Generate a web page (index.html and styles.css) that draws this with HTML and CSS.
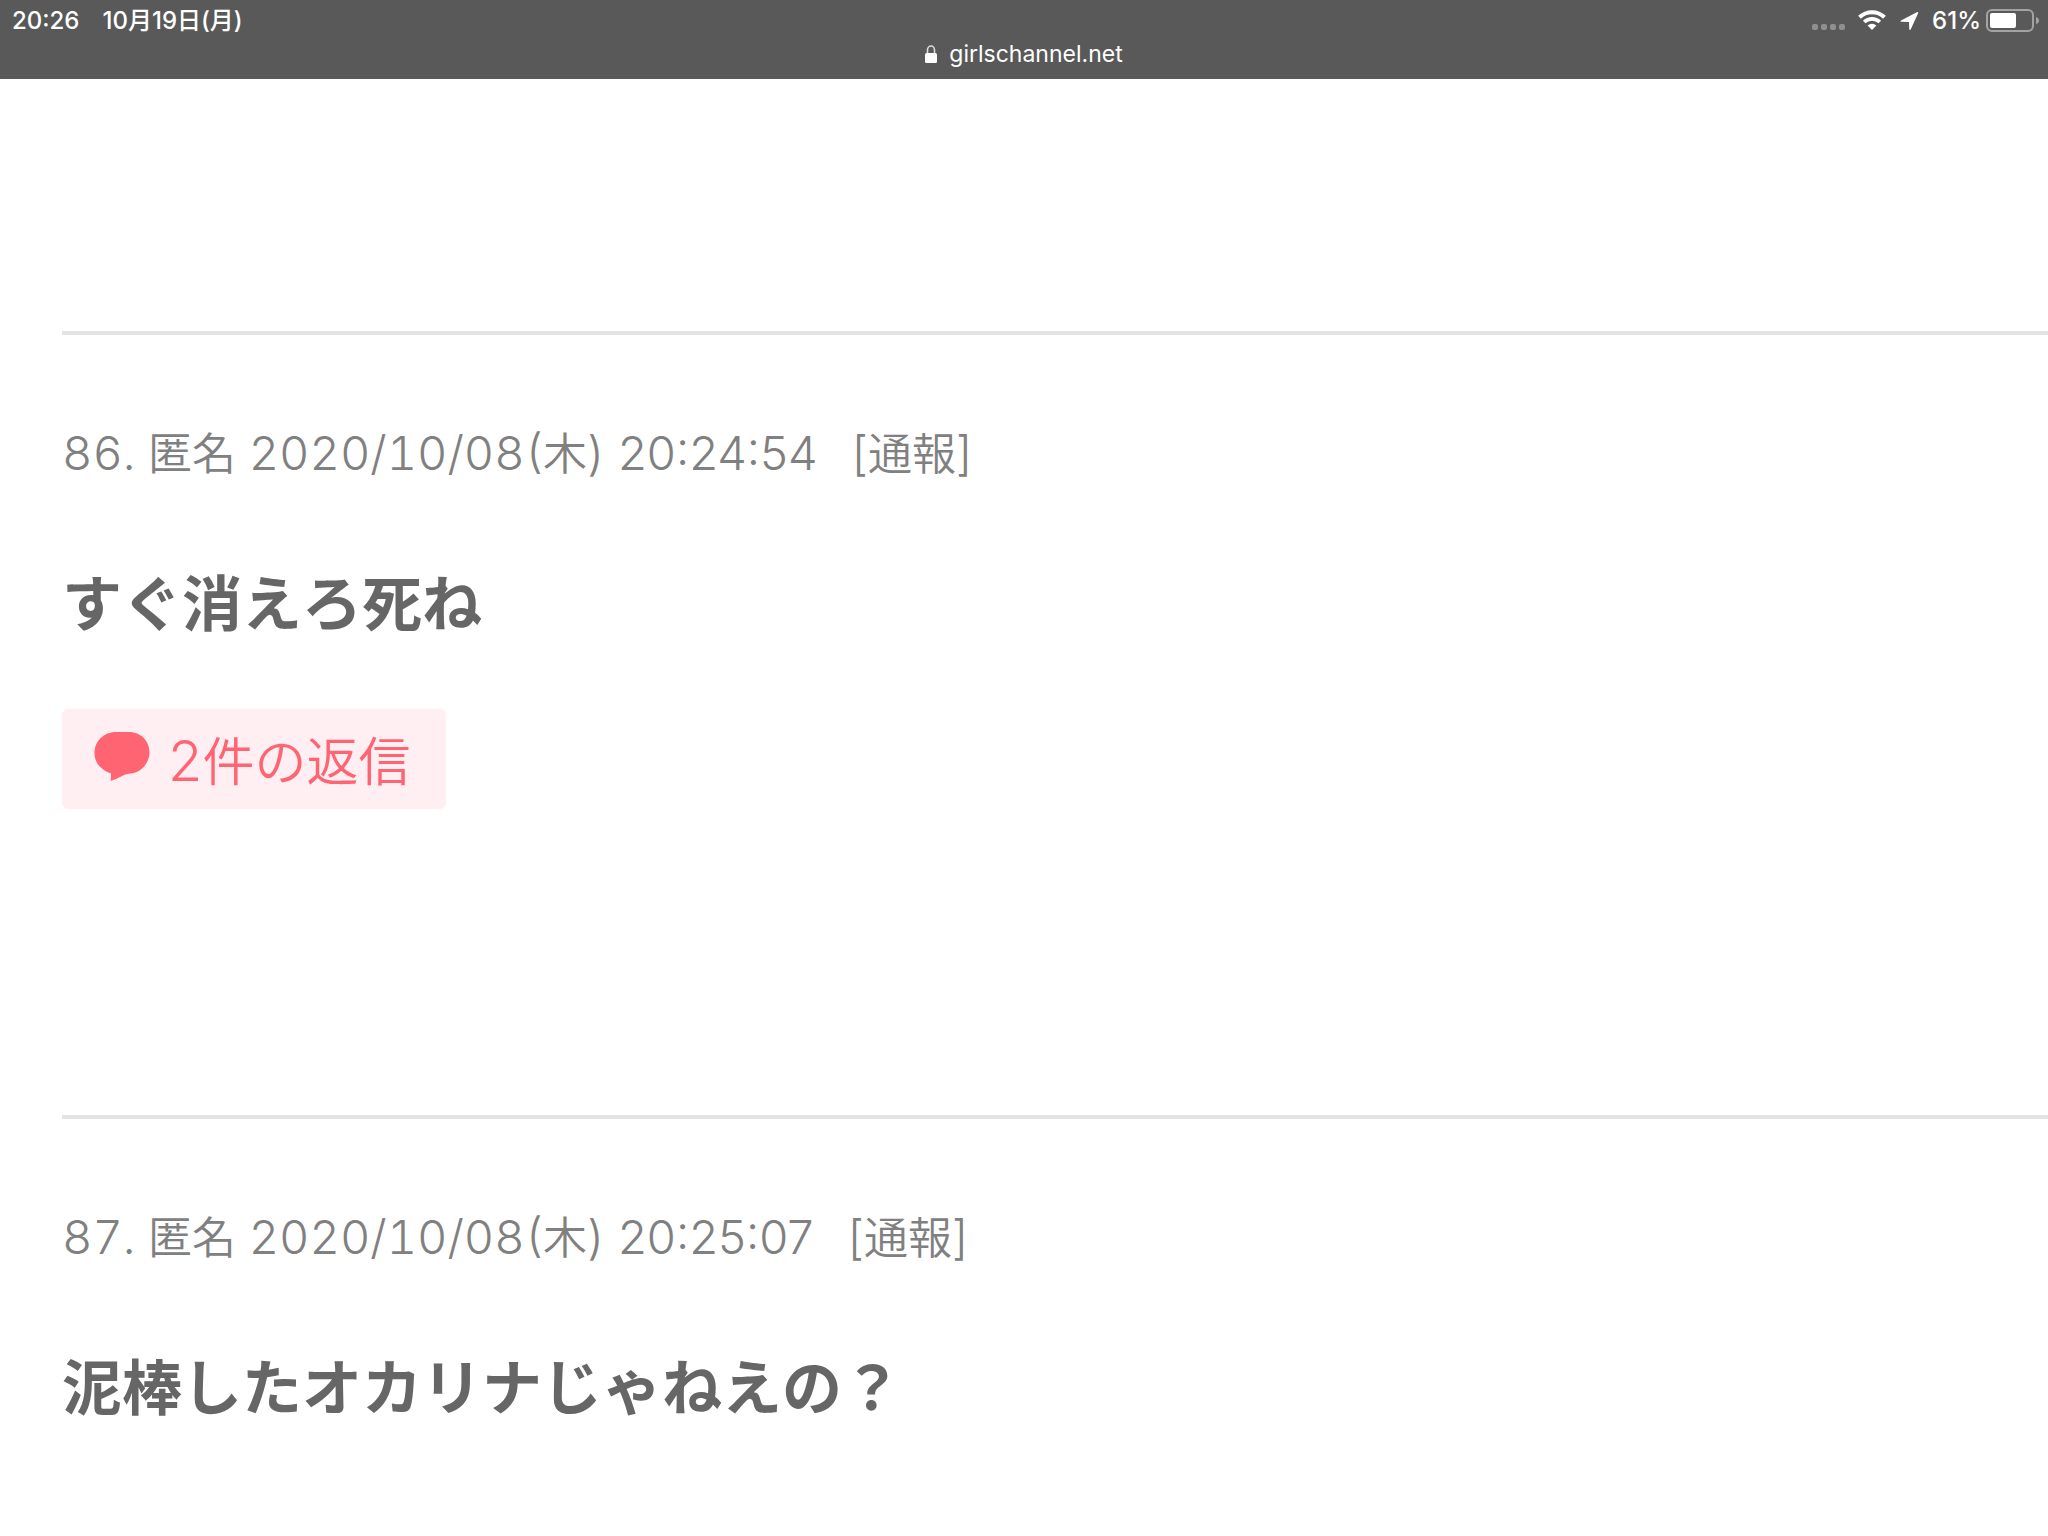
FILE: index.html
```html
<!DOCTYPE html>
<html lang="ja">
<head>
  <meta charset="UTF-8">
  <title>girlschannel.net</title>
  <meta name="viewport" content="width=device-width, initial-scale=1.0">
  <link rel="stylesheet" href="styles.css">
</head>
<body>
  <header class="topbar">
    <div class="status">
      <div class="status-left">
        <span>20:26</span>
        <span>10月19日(月)</span>
      </div>
      <div class="status-right">
        <svg class="dots" width="34" height="24" viewBox="0 0 34 24" fill="#8f8f8f">
          <rect x="0" y="17" width="6" height="6" rx="2"/>
          <rect x="9" y="17" width="6" height="6" rx="2"/>
          <rect x="18" y="17" width="6" height="6" rx="2"/>
          <rect x="27" y="17" width="6" height="6" rx="2"/>
        </svg>
        <svg class="wifi" width="28" height="24" viewBox="0 0 28 24">
          <path d="M1.5 10.2 A18 18 0 0 1 26.5 10.2" fill="none" stroke="#fff" stroke-width="4"/>
          <path d="M6.2 15 A11.2 11.2 0 0 1 21.8 15" fill="none" stroke="#fff" stroke-width="3.6"/>
          <path d="M14 23 L9.6 18.6 A6.4 6.4 0 0 1 18.4 18.6 Z" fill="#fff"/>
        </svg>
        <svg class="arrow" width="19" height="24" viewBox="0 0 19 24">
          <path d="M1 13.4 L16.8 5.3 Q18.6 4.6 18 6.5 L10.8 22.3 Q9.7 23.8 9.2 21.9 L9 14.9 L1.6 14.8 Q-.4 14.5 1 13.4 Z" fill="#fff"/>
        </svg>
        <span>61%</span>
        <svg class="battery" width="54" height="25" viewBox="0 0 54 25">
          <rect x="1" y="3" width="46" height="21" rx="5" fill="none" stroke="#a3a3a3" stroke-width="2"/>
          <rect x="4" y="6" width="26" height="15" rx="2" fill="#fff"/>
          <path d="M50 10 Q53 11 53 13.5 Q53 16 50 17 Z" fill="#a3a3a3"/>
        </svg>
      </div>
    </div>
    <div class="address">
      <svg width="12" height="20" viewBox="0 0 12 20">
        <path d="M2.5 10 V6 A3.5 4 0 0 1 9.5 6 V10" fill="none" stroke="#ddd" stroke-width="1.6"/>
        <rect x="0" y="9" width="12" height="10" rx="1.5" fill="#fff"/>
      </svg>
      <span>girlschannel.net</span>
    </div>
  </header>

  <main class="comments">
    <article class="comment">
      <p class="info"><span class="num">86. </span>匿名<span class="num"> 2020/10/08(</span>木<span class="num">) <span class="time">20:24:54</span></span><a class="report" href="#"><span class="num">[</span>通報<span class="num">]</span></a></p>
      <p class="body">すぐ消えろ死ね</p>
      <button type="button" class="replies">
        <svg width="56" height="54" viewBox="0 0 56 54">
          <path d="M22 0 H35 C47 0 55.5 9 55.5 20.5 C55.5 31 47 41 36 41.5 C30 42 23 47 18 48.6 Q16.5 49 16.8 47.5 L17 41.5 C7 38 .5 31 .5 21 C.5 9 10 0 22 0 Z" fill="#ff6473"/>
        </svg>
        <span><span class="count">2</span>件の返信</span>
      </button>
    </article>

    <article class="comment">
      <p class="info"><span class="num">87. </span>匿名<span class="num"> 2020/10/08(</span>木<span class="num">) <span class="time">20:25:07</span></span><a class="report" href="#"><span class="num">[</span>通報<span class="num">]</span></a></p>
      <p class="body">泥棒したオカリナじゃねえの？</p>
    </article>
  </main>
</body>
</html>
```

FILE: styles.css
```css
* { box-sizing: border-box; }
body { margin: 0; background: #fff; color: #666; font-family: "Noto Sans CJK JP", sans-serif; }
p { margin: 0; }

.topbar { height: 79px; background: #595959; color: #fff; font-family: Inter, "Noto Sans CJK JP", sans-serif; font-size: 24px; line-height: 28px; }
.status { display: flex; justify-content: space-between; padding: 7px 12px 0; font-weight: 500; }
.status-left { display: flex; gap: 23px; }
.status-right { display: flex; margin-right: -4px; }
.wifi { margin-left: 12px; }
.arrow { margin: 0 13px 0 14px; }
.battery { margin-left: 5px; }
.address { display: flex; justify-content: center; align-items: center; gap: 12px; padding-top: 5px; font-size: 23px; font-weight: 400; }

.comments { padding: 252px 0 0 62px; }
.comment { border-top: 4px solid #e3e3e3; padding-top: 84px; }
.comment + .comment { margin-top: 306px; }
.info { color: #808080; font-size: 44px; font-weight: 350; line-height: 64px; white-space: pre; }
.num, .count { font-family: Inter, sans-serif; font-weight: 300; line-height: 48px; }
.num { font-size: 47px; font-variant-numeric: tabular-nums; }
.time { font-variant-numeric: normal; }
.count { font-size: 56px; }
.report { margin-left: 32px; color: inherit; text-decoration: none; }
.body { margin-top: 72px; font-size: 60px; font-weight: 700; line-height: 90px; }
.replies { display: flex; align-items: center; gap: 18px; height: 100px; margin-top: 64px; padding: 0 36px 0 32px; border: 0; border-radius: 6px; background: #ffeef2; color: #ff6473; font-family: inherit; font-size: 52px; font-weight: 350; line-height: 76px; cursor: pointer; }
```
